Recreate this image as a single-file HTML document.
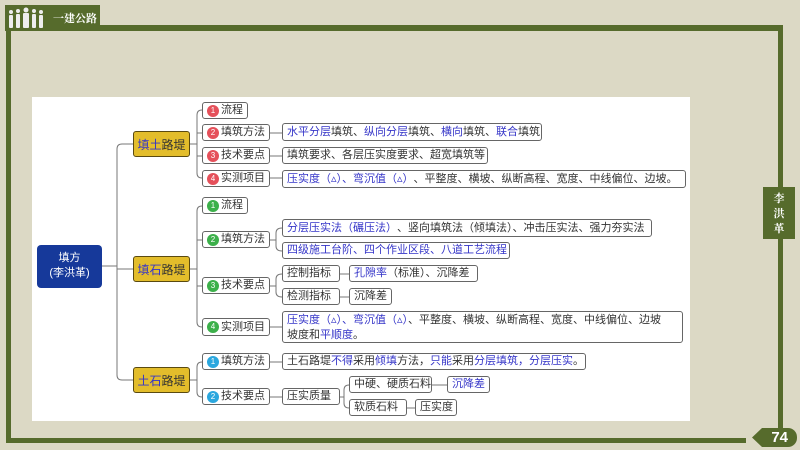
<!DOCTYPE html>
<html><head><meta charset="utf-8"><style>
*{margin:0;padding:0;box-sizing:border-box}
body{width:800px;height:450px;background:#dcd9c5;position:relative;overflow:hidden;font-family:"Liberation Sans","Noto Sans CJK SC",sans-serif;color:#333}
.g{position:absolute;background:#566b2c}
.panel{position:absolute;left:32px;top:97px;width:658px;height:324px;background:#fff}
.b{position:absolute;border:1px solid #666;border-radius:3px;background:#fff;font-size:11px;line-height:15px;padding:0 4px;white-space:nowrap;display:flex;align-items:center}
.u{color:#3535c8}
.n{display:inline-block;width:12px;height:12px;border-radius:50%;color:#fff;font-size:8px;line-height:12px;text-align:center;margin-right:2px;font-family:"Liberation Sans",sans-serif}
.r{background:#e5505a}.gr{background:#3cb04a}.c{background:#2ba7de}
.y{position:absolute;background:#e3bd2b;border:1px solid #5a4a10;border-radius:3px;font-size:12px;display:flex;align-items:center;justify-content:center;color:#333}
</style></head><body>
<div class="g" style="left:100px;top:25px;width:683px;height:6px"></div>
<div class="g" style="left:778px;top:25px;width:5px;height:418px"></div>
<div class="g" style="left:6px;top:30px;width:5px;height:413px"></div>
<div class="g" style="left:6px;top:438px;width:740px;height:5px"></div>
<div class="g" style="left:5px;top:5px;width:95px;height:26px;display:flex;align-items:center">
<svg width="40" height="24" viewBox="0 0 40 24" style="margin-left:2px"><g fill="#eee"><circle cx="4" cy="6" r="2"/><rect x="2" y="9" width="4" height="13" rx="1"/><circle cx="11" cy="5" r="2"/><rect x="9" y="8" width="4" height="14" rx="1"/><circle cx="19" cy="4" r="2.5"/><rect x="16" y="7" width="6" height="15" rx="1"/><circle cx="27" cy="5" r="2"/><rect x="25" y="8" width="4" height="14" rx="1"/><circle cx="34" cy="6" r="2"/><rect x="32" y="9" width="4" height="13" rx="1"/></g></svg>
<span style="color:#fff;font-size:11px;font-weight:bold;margin-left:6px;font-family:'Noto Serif CJK SC',serif">一建公路</span></div>
<div class="g" style="left:763px;top:187px;width:32px;height:52px;color:#fff;font-size:11px;line-height:15px;text-align:center;padding-top:4px;font-weight:bold;font-family:'Noto Serif CJK SC',serif">李<br>洪<br>革</div>
<div class="g" style="left:752px;top:428px;width:45px;height:19px;border-radius:0 9px 9px 0;clip-path:polygon(10px 0,100% 0,100% 100%,10px 100%,0 50%);color:#fff;font-weight:bold;font-size:15px;text-align:right;padding-right:9px;line-height:19px">74</div>
<div class="panel"></div>
<svg style="position:absolute;left:0;top:0" width="800" height="450" fill="none" stroke="#777" stroke-width="1">
<path d="M102 266H117M133 144H122Q117 144 117 149V375Q117 380 122 380H133M117 269H133"/>
<path d="M190 144H197M202 110Q197 110 197 115V173Q197 178 202 178M197 133H202M197 156H202"/>
<path d="M190 269H197M202 206Q197 206 197 211V322Q197 327 202 327M197 240H202M197 286H202"/>
<path d="M190 380H197M202 362Q197 362 197 367V392Q197 397 202 397"/>
<path d="M270 133H282M270 156H282M270 178H282M270 327H282"/>
<path d="M270 240H276M282 228Q276 228 276 233V246Q276 251 282 251"/>
<path d="M270 286H276M282 274Q276 274 276 279V292Q276 297 282 297M340 274H349M340 297H349"/>
<path d="M270 362H282M270 397H282M340 397H344M349 385Q344 385 344 390V403Q344 408 349 408M432 385H447M407 408H415"/>
</svg>
<div style="position:absolute;left:37px;top:245px;width:65px;height:43px;background:#16399a;border-radius:4px;color:#fff;font-size:11px;line-height:15px;text-align:center;padding-top:6px">填方<br>(李洪革)</div>
<div class="y" style="left:133px;top:131px;width:57px;height:26px"><span class="u">填土</span>路堤</div>
<div class="y" style="left:133px;top:256px;width:57px;height:26px"><span class="u">填石</span>路堤</div>
<div class="y" style="left:133px;top:367px;width:57px;height:26px"><span class="u">土石</span>路堤</div>

<div class="b" style="left:202px;top:102px;height:17px"><span class="n r">1</span>流程</div>
<div class="b" style="left:202px;top:124px;height:17px"><span class="n r">2</span>填筑方法</div>
<div class="b" style="left:202px;top:147px;height:17px"><span class="n r">3</span>技术要点</div>
<div class="b" style="left:202px;top:170px;height:17px"><span class="n r">4</span>实测项目</div>
<div class="b" style="left:202px;top:197px;height:17px"><span class="n gr">1</span>流程</div>
<div class="b" style="left:202px;top:231px;height:17px"><span class="n gr">2</span>填筑方法</div>
<div class="b" style="left:202px;top:277px;height:17px"><span class="n gr">3</span>技术要点</div>
<div class="b" style="left:202px;top:318px;height:18px"><span class="n gr">4</span>实测项目</div>
<div class="b" style="left:202px;top:353px;height:17px"><span class="n c">1</span>填筑方法</div>
<div class="b" style="left:202px;top:388px;height:17px"><span class="n c">2</span>技术要点</div>

<div class="b" style="left:282px;top:123px;height:18px;width:260px"><span class="u">水平分层</span>填筑、<span class="u">纵向分层</span>填筑、<span class="u">横向</span>填筑、<span class="u">联合</span>填筑</div>
<div class="b" style="left:282px;top:147px;height:17px;width:206px">填筑要求、各层压实度要求、超宽填筑等</div>
<div class="b" style="left:282px;top:170px;height:18px;width:404px"><span class="u">压实度（▵）、弯沉值（▵）</span>、平整度、横坡、纵断高程、宽度、中线偏位、边坡。</div>
<div class="b" style="left:282px;top:219px;height:18px;width:370px"><span class="u">分层压实法（碾压法）</span>、竖向填筑法（倾填法）、冲击压实法、强力夯实法</div>
<div class="b u" style="left:282px;top:242px;height:17px;width:228px">四级施工台阶、四个作业区段、八道工艺流程</div>
<div class="b" style="left:282px;top:265px;height:17px;width:58px">控制指标</div>
<div class="b" style="left:349px;top:265px;height:17px;width:129px"><span class="u">孔隙率</span>（标准）、沉降差</div>
<div class="b" style="left:282px;top:288px;height:17px;width:58px">检测指标</div>
<div class="b" style="left:349px;top:288px;height:17px;width:43px">沉降差</div>
<div class="b" style="left:282px;top:311px;height:32px;width:401px;display:block;white-space:normal;padding-top:1px"><span class="u">压实度（▵）、弯沉值（▵）</span>、平整度、横坡、纵断高程、宽度、中线偏位、边坡<br>坡度和<span class="u">平顺度</span>。</div>
<div class="b" style="left:282px;top:353px;height:17px;width:304px">土石路堤<span class="u">不得</span>采用<span class="u">倾填</span>方法，<span class="u">只能</span>采用<span class="u">分层填筑，分层压实</span>。</div>
<div class="b" style="left:282px;top:388px;height:17px;width:58px">压实质量</div>
<div class="b" style="left:349px;top:376px;height:17px;width:83px">中硬、硬质石料</div>
<div class="b u" style="left:447px;top:376px;height:17px;width:43px">沉降差</div>
<div class="b" style="left:349px;top:399px;height:17px;width:58px">软质石料</div>
<div class="b" style="left:415px;top:399px;height:17px;width:42px">压实度</div>
</body></html>
